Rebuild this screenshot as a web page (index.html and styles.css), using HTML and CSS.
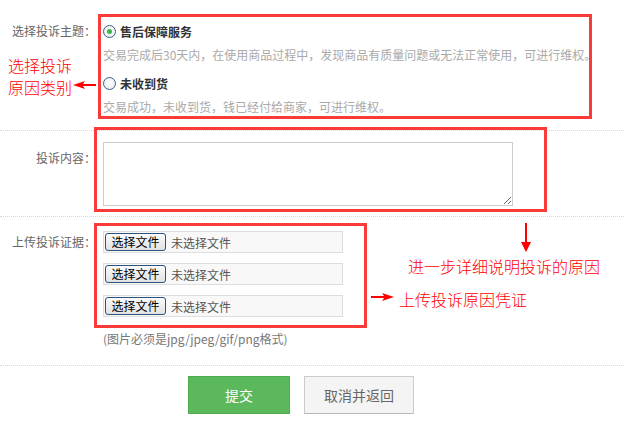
FILE: index.html
```html
<!DOCTYPE html>
<html lang="zh-CN">
<head>
<meta charset="utf-8">
<title>投诉</title>
<link rel="stylesheet" href="styles.css">
</head>
<body>
<div class="form">
  <div class="row row-topic">
    <div class="label">选择投诉主题：</div>
    <div class="field">
      <div class="option"><span class="radio checked"></span><span class="opt-title">售后保障服务</span></div>
      <p class="desc">交易完成后30天内，在使用商品过程中，发现商品有质量问题或无法正常使用，可进行维权。</p>
      <div class="option option-2"><span class="radio"></span><span class="opt-title">未收到货</span></div>
      <p class="desc">交易成功，未收到货，钱已经付给商家，可进行维权。</p>
    </div>
    <div class="mark mark-topic"></div>
    <div class="note note-topic">选择投诉<br>原因类别</div>
    <svg class="arrow arrow-left" width="24" height="10" viewBox="0 0 24 10"><polygon points="0,5 12,1 10,4 23,4 23,6 10,6 12,9" fill="#f00"/></svg>
  </div>

  <div class="row row-content">
    <div class="label label-content">投诉内容：</div>
    <div class="field">
      <textarea class="textarea"></textarea>
    </div>
    <div class="mark mark-content"></div>
  </div>

  <div class="row row-upload">
    <div class="label label-upload">上传投诉证据：</div>
    <div class="field files">
      <div class="file"><span class="file-btn">选择文件</span><span class="file-name">未选择文件</span></div>
      <div class="file"><span class="file-btn">选择文件</span><span class="file-name">未选择文件</span></div>
      <div class="file"><span class="file-btn">选择文件</span><span class="file-name">未选择文件</span></div>
      <p class="hint">(图片必须是jpg/jpeg/gif/png格式)</p>
    </div>
    <div class="mark mark-upload"></div>
    <svg class="arrow arrow-down" width="10" height="30" viewBox="0 0 10 30"><polygon points="4,0 6,0 6,19 10,19 5,29 0,19 4,19" fill="#f00"/></svg>
    <div class="note note-content">进一步详细说明投诉的原因</div>
    <svg class="arrow arrow-right" width="24" height="10" viewBox="0 0 24 10"><polygon points="24,5 12,1 14,4 1,4 1,6 14,6 12,9" fill="#f00"/></svg>
    <div class="note note-upload">上传投诉原因凭证</div>
  </div>

  <div class="row row-actions">
    <button class="btn btn-submit" type="button">提交</button>
    <button class="btn btn-cancel" type="button">取消并返回</button>
  </div>
</div>
</body>
</html>
```
FILE: styles.css
```css
* { box-sizing: border-box; }
html, body { margin: 0; padding: 0; background: #fff; }
body {
  font-family: "Noto Sans CJK SC", "Noto Sans", "Liberation Sans", sans-serif;
  font-size: 12px;
  color: #666;
  width: 624px;
  height: 421px;
  overflow: hidden;
}
.row {
  position: relative;
  display: flex;
  align-items: flex-start;
  gap: 7px;
  border-bottom: 1px dotted #d8d8d8;
}
.label {
  width: 96px;
  flex: none;
  text-align: right;
  line-height: 24px;
  color: #666;
  white-space: nowrap;
}
.field { flex: none; }

/* topic row */
.row-topic { padding: 19px 0 11px; }
.option {
  display: flex;
  align-items: center;
  height: 24px;
}
.option-2 { margin-top: 4px; }
.radio {
  width: 13px;
  height: 13px;
  border-radius: 50%;
  border: 1px solid #3d5f82;
  background: radial-gradient(circle at 50% 40%, #fff 0%, #e6e9ee 100%);
  margin-right: 4px;
  position: relative;
  flex: none;
}
.radio.checked::after {
  content: "";
  position: absolute;
  left: 3px;
  top: 3px;
  width: 5px;
  height: 5px;
  border-radius: 50%;
  background: #3cb54a;
}
.opt-title { font-weight: bold; color: #333; }
.desc {
  margin: 0;
  line-height: 24px;
  color: #aaa;
  white-space: nowrap;
}

/* content row */
.row-content { padding: 11px 0 10px; }
.label-content { padding-top: 4px; }
.textarea {
  display: block;
  width: 410px;
  height: 64px;
  border: 1px solid #ccc;
  margin: 0;
  padding: 2px;
  font: inherit;
  resize: both;
  background: #fff;
}

/* upload row */
.row-upload { padding: 14px 0 14px; }
.label-upload { line-height: 22px; }
.files { display: flex; flex-direction: column; gap: 10px; }
.file {
  width: 240px;
  height: 22px;
  border: 1px solid #ddd;
  background: #f8f8f8;
  display: flex;
  align-items: center;
  padding-left: 1px;
}
.file-btn {
  width: 61px;
  height: 18px;
  border: 1px solid #2a5282;
  border-radius: 3px;
  background: linear-gradient(#fbfbfb, #e2e2e2);
  color: #000;
  font-size: 12px;
  line-height: 16px;
  text-align: center;
}
.file-name { margin-left: 5px; color: #555; }
.hint {
  margin: 0;
  line-height: 24px;
  color: #777;
}

/* actions */
.row-actions {
  border-bottom: none;
  padding: 10px 0 0 188px;
  gap: 14px;
}
.btn {
  height: 38px;
  font-family: inherit;
  font-size: 14px;
  margin: 0;
  cursor: pointer;
}
.btn-submit {
  width: 102px;
  background: #5cb85c;
  border: 1px solid #4cae4c;
  color: #fff;
}
.btn-cancel {
  width: 110px;
  background: #f4f4f4;
  border: 1px solid #ccc;
  border-bottom-color: #b8b8b8;
  color: #666;
}

/* annotations overlaid on the form */
.mark {
  position: absolute;
  border: 3px solid #fb3a3a;
  pointer-events: none;
}
.mark-topic { left: 98px; top: 14px; width: 494px; height: 105px; }
.mark-content { left: 94px; top: -4px; width: 453px; height: 85px; }
.mark-upload { left: 94px; top: 6px; width: 273px; height: 105px; }
.note {
  position: absolute;
  color: #f00;
  font-size: 16px;
  font-weight: 300;
  line-height: 22px;
  white-space: nowrap;
}
.note-topic { left: 8px; top: 54px; }
.note-content { left: 408px; top: 38px; }
.note-upload { left: 399px; top: 71px; }
.arrow { position: absolute; display: block; }
.arrow-left { left: 73px; top: 80px; }
.arrow-down { left: 521px; top: 6px; }
.arrow-right { left: 370px; top: 75px; }
```
